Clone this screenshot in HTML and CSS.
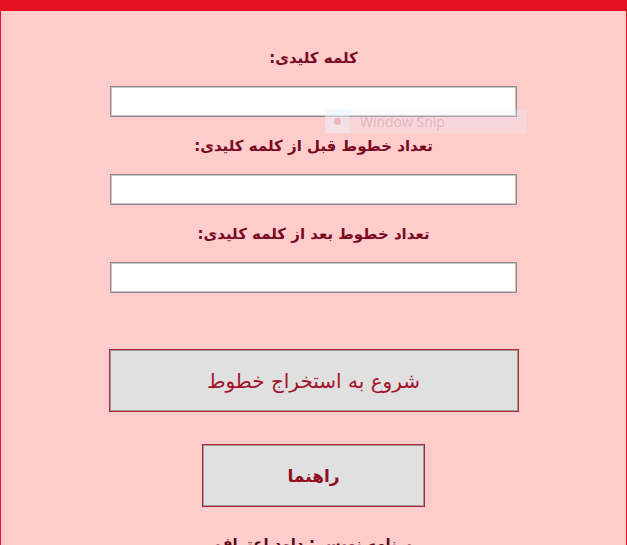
FILE: index.html
```html
<!DOCTYPE html>
<html lang="fa" dir="rtl">
<head>
<meta charset="utf-8">
<title>استخراج خطوط</title>
<link rel="stylesheet" href="styles.css">
</head>
<body>
<div class="titlebar"></div>
<main class="panel">
  <label class="label label-first">کلمه کلیدی:</label>
  <input class="field" type="text">
  <label class="label">تعداد خطوط قبل از کلمه کلیدی:</label>
  <input class="field" type="text">
  <label class="label">تعداد خطوط بعد از کلمه کلیدی:</label>
  <input class="field" type="text">
  <button class="btn btn-start">شروع به استخراج خطوط</button>
  <button class="btn btn-help">راهنما</button>
  <p class="footer">برنامه نویس : داود اعتراف</p>
  <div class="snip" dir="ltr"><span class="snip-icon"><span class="snip-dot"></span></span><span class="snip-text">Window Snip</span></div>
</main>
</body>
</html>
```
FILE: styles.css
```css
html, body {
  margin: 0;
  padding: 0;
}
body {
  width: 627px;
  height: 545px;
  overflow: hidden;
  background: #FFCCCC;
  font-family: "DejaVu Sans", sans-serif;
}
.titlebar {
  height: 11px;
  background: #E81123;
}
.panel {
  position: relative;
  height: 534px;
  box-sizing: border-box;
  border-left: 1px solid #E81123;
  border-right: 1px solid #E81123;
  display: flex;
  flex-direction: column;
  align-items: center;
}
.label {
  display: block;
  font-weight: bold;
  font-size: 15px;
  line-height: 20px;
  color: #7A0A1E;
  margin-top: 19px;
  margin-bottom: 18px;
}
.label-first {
  margin-top: 37px;
}
.field {
  width: 407px;
  height: 31px;
  box-sizing: border-box;
  border: 1px solid #8A8A8A;
  box-shadow: inset 0 0 0 1px #C8C8C8;
  background: #fff;
  margin: 0;
  padding: 0 4px;
  flex-shrink: 0;
}
.btn {
  box-sizing: border-box;
  background: #E0E0E0;
  border: 1px solid #B3243A;
  box-shadow: inset 0 0 0 1px #9C9C9C;
  color: #A3122A;
  font-family: "DejaVu Sans", sans-serif;
  padding: 0;
  flex-shrink: 0;
}
.btn-start {
  width: 410px;
  height: 63px;
  margin-top: 56px;
  font-size: 20px;
}
.btn-help {
  width: 223px;
  height: 63px;
  margin-top: 32px;
  font-size: 17px;
  font-weight: bold;
  color: #8E0E22;
}
.footer {
  margin: 27px 0 0;
  font-size: 15px;
  line-height: 20px;
  font-weight: bold;
  color: #5E0A16;
  flex-shrink: 0;
}
.snip {
  position: absolute;
  left: 324px;
  top: 98px;
  width: 202px;
  height: 24px;
  background: rgba(235, 242, 255, 0.28);
  display: flex;
  align-items: center;
  font-family: "Open Sans", sans-serif;
  font-size: 14px;
  color: rgba(200, 150, 160, 0.55);
}
.snip-icon {
  width: 24px;
  height: 24px;
  background: rgba(235, 245, 255, 0.35);
  display: flex;
  align-items: center;
  justify-content: center;
  margin-right: 11px;
}
.snip-dot {
  width: 7px;
  height: 7px;
  border-radius: 50%;
  background: rgba(240, 150, 160, 0.6);
}
```
